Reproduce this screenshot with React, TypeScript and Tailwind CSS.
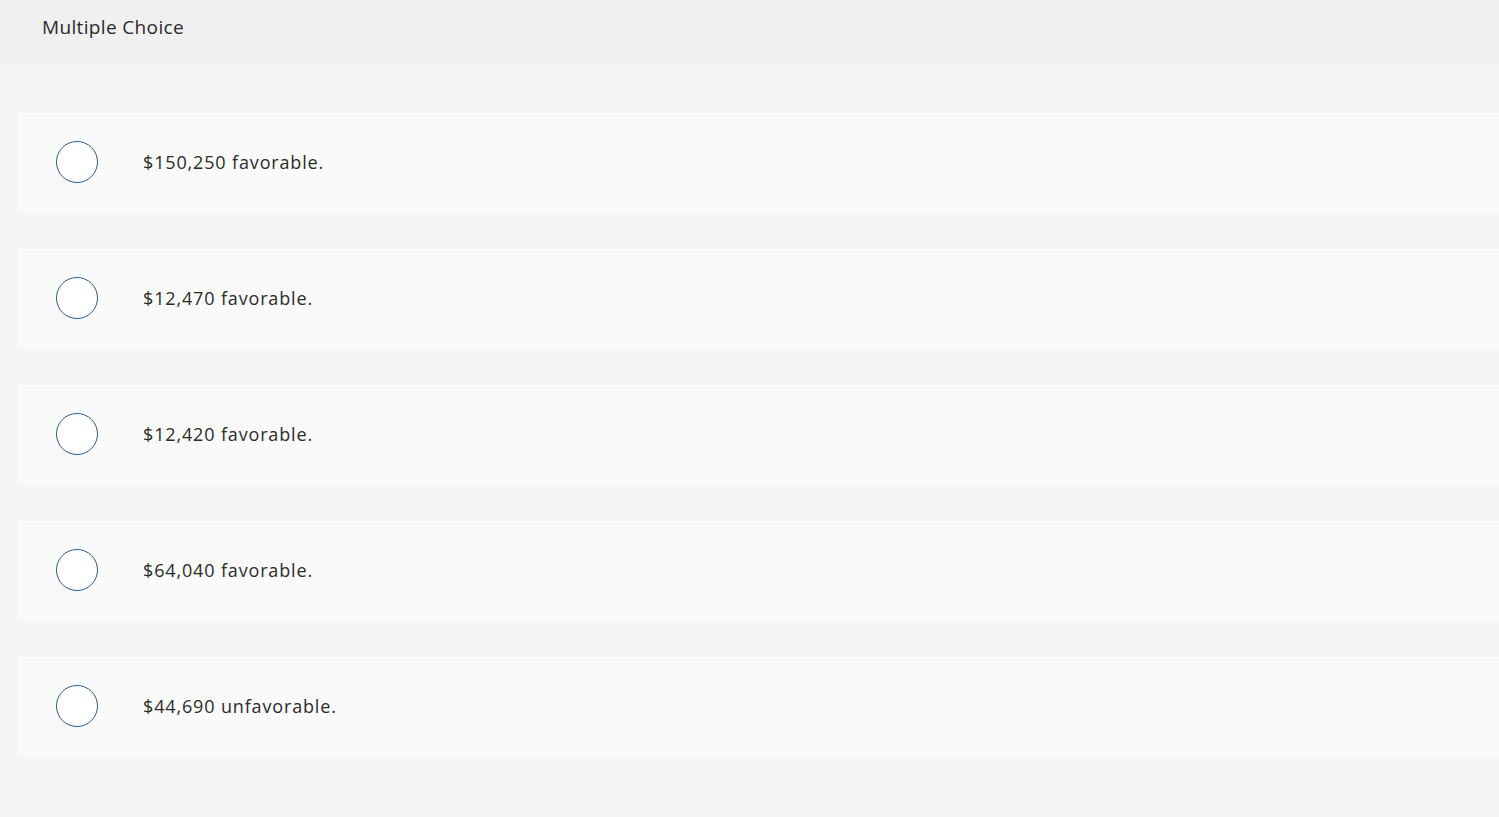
import React from "react";

const options = [
  "$150,250 favorable.",
  "$12,470 favorable.",
  "$12,420 favorable.",
  "$64,040 favorable.",
  "$44,690 unfavorable.",
];

export default function App() {
  return (
    <div
      className="w-full min-h-[817px] bg-[#f5f5f5] overflow-hidden text-[#2b2b2b]"
      style={{ fontFamily: '"Open Sans", "Liberation Sans", sans-serif' }}
    >
      <div className="h-[65px] bg-[#f0f0f0] flex items-center pl-[42px] pb-[11px]">
        <span className="text-[19px] tracking-[0.35px]">Multiple Choice</span>
      </div>
      <div className="flex flex-col gap-[37px] pt-[48px] pl-[18px]">
        {options.map((o) => (
          <div
            key={o}
            className="h-[99px] bg-[#fafafa] rounded-l-[4px] flex items-center"
          >
            <div className="ml-[38px] -mt-[2px] w-[42px] h-[42px] rounded-full border border-[#2a5a8c] bg-white shrink-0" />
            <span className="ml-[45px] text-[18px] tracking-[0.85px]">{o}</span>
          </div>
        ))}
      </div>
    </div>
  );
}
